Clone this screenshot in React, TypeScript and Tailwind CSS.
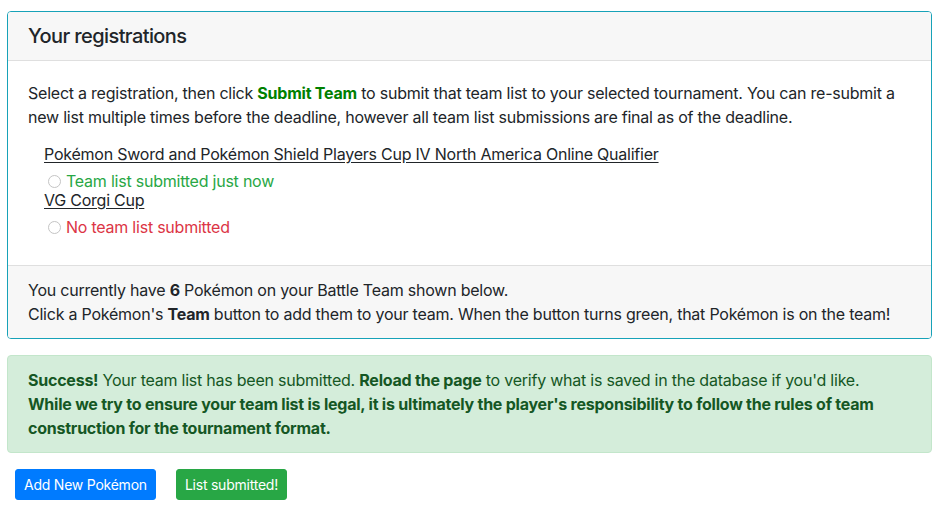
import React from "react";

const font = { fontFamily: "Inter, 'Noto Sans', 'Liberation Sans', sans-serif" };

function Radio() {
  return (
    <span className="inline-block w-[13px] h-[13px] rounded-full border border-[#c4c4c4] bg-white mr-[5px] ml-[4px] shrink-0" />
  );
}

export default function App() {
  return (
    <div className="bg-white w-[939px] h-[511px] pt-[11px] px-[7px] text-[16px] leading-[24px] tracking-[-0.23px] text-[#212529]" style={font}>
      <div className="border border-[#17a2b8] rounded-[4px] overflow-hidden">
        <div className="bg-[#f7f7f7] border-b border-[#dfdfdf] px-[20px] h-[49px] flex items-center">
          <h5 className="text-[20px] font-medium leading-[24px] tracking-[-0.6px] text-[#212529]">Your registrations</h5>
        </div>
        <div className="px-[20px] pt-[20px] pb-[27px]">
          <p>
            Select a registration, then click <b className="text-[#008000] font-bold">Submit Team</b> to submit that team list to your selected tournament. You can re-submit a new list multiple times before the deadline, however all team list submissions are final as of the deadline.
          </p>
          <div className="pl-[16px] mt-[17px]">
            <div className="leading-[16px]"><span className="underline underline-offset-2">Pokémon Sword and Pokémon Shield Players Cup IV North America Online Qualifier</span></div>
            <div className="mt-[8px] leading-[22px] flex items-center text-[#28a745]"><Radio />Team list submitted just now</div>
            <div className="leading-[16px]"><span className="underline underline-offset-2">VG Corgi Cup</span></div>
            <div className="mt-[8px] leading-[22px] flex items-center text-[#dc3545]"><Radio />No team list submitted</div>
          </div>
        </div>
        <div className="bg-[#f7f7f7] border-t border-[#dfdfdf] px-[20px] py-[12px]">
          <div>You currently have <b>6</b> Pokémon on your Battle Team shown below.</div>
          <div>Click a Pokémon's <b>Team</b> button to add them to your team. When the button turns green, that Pokémon is on the team!</div>
        </div>
      </div>
      <div className="mt-[16px] bg-[#d4edda] border border-[#c3e6cb] text-[#155724] rounded-[4px] px-[20px] py-[12px]">
        <div><b>Success!</b> Your team list has been submitted. <b>Reload the page</b> to verify what is saved in the database if you'd like.</div>
        <div className="font-bold">While we try to ensure your team list is legal, it is ultimately the player's responsibility to follow the rules of team construction for the tournament format.</div>
      </div>
      <div className="mt-[16px] flex gap-[20px] pl-[8px]">
        <button className="bg-[#007bff] text-white text-[14px] leading-[21px] px-[8px] py-[4px] rounded-[3px] border border-[#007bff]">Add New Pokémon</button>
        <button className="bg-[#28a745] text-white text-[14px] leading-[21px] px-[8px] py-[4px] rounded-[3px] border border-[#28a745]">List submitted!</button>
      </div>
    </div>
  );
}
